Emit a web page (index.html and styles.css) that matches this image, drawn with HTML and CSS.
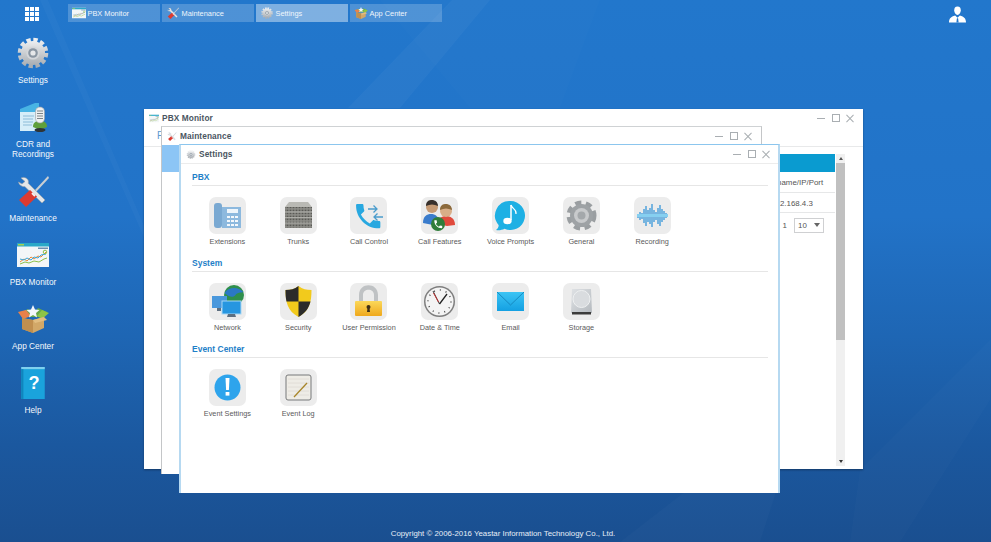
FILE: index.html
```html
<!DOCTYPE html>
<html lang="en">
<head>
<meta charset="utf-8">
<title>Yeastar Desktop</title>
<link rel="stylesheet" href="styles.css">
</head>
<body>
<svg class="defs" xmlns="http://www.w3.org/2000/svg">
  <defs>
    <linearGradient id="silver" x1="0" y1="0" x2="0" y2="1"><stop offset="0" stop-color="#eceef0"/><stop offset="1" stop-color="#a9aeb3"/></linearGradient>
    <linearGradient id="sky" x1="0" y1="0" x2="0" y2="1"><stop offset="0" stop-color="#3cc4f4"/><stop offset="1" stop-color="#14a0e2"/></linearGradient>
    <linearGradient id="gold" x1="0" y1="0" x2="0" y2="1"><stop offset="0" stop-color="#fbd85a"/><stop offset="1" stop-color="#efa81c"/></linearGradient>
    <linearGradient id="drive" x1="0" y1="0" x2="1" y2="1"><stop offset="0" stop-color="#dfe2e5"/><stop offset="1" stop-color="#b4b9be"/></linearGradient>
    <pattern id="holes" width="3" height="3" patternUnits="userSpaceOnUse"><rect width="3" height="3" fill="#8f8f8a"/><rect x=".6" y=".6" width="1.8" height="1.6" fill="#5a5a56"/></pattern>

    <symbol id="i-gear" viewBox="0 0 32 32">
      <circle cx="16" cy="16" r="13" fill="none" stroke="url(#silver)" stroke-width="4.6" stroke-dasharray="4.2 2.6"/>
      <circle cx="16" cy="16" r="12" fill="url(#silver)"/>
      <circle cx="16" cy="16" r="6.600" fill="#d4d7da"/>
      <circle cx="16" cy="16" r="4.800" fill="#8a96a2"/>
      <circle cx="16" cy="16" r="2.600" fill="#e6e8ea"/>
    </symbol>
    <symbol id="i-cdr" viewBox="0 0 32 32">
      <path d="M3 8 18 2h4v5l-2 21-17 2z" fill="#48b4e4"/>
      <path d="M3 11h17v19H3z" fill="#d6eef9"/>
      <path d="M6 15h11M6 18h10M6 21h10M6 24h9" stroke="#8cbcd8" stroke-width="1"/>
      <path d="M16 26c0-5 3-6 7-6s7 1 7 6l-7 3z" fill="#5fa03c"/>
      <rect x="18.500" y="6" width="9" height="16" rx="4.500" fill="#eef0f0" stroke="#9aa0a2" stroke-width=".6"/>
      <path d="M20 10h6M20 12.500h6M20 15h6M20 17.500h6" stroke="#7d8588" stroke-width="1"/>
      <ellipse cx="23" cy="29" rx="5.500" ry="2" fill="#2f3436"/>
    </symbol>
    <symbol id="i-tools" viewBox="0 0 32 32">
      <path d="M4 3c3-1.500 6 0 7 2 .6 1.400.4 2.500.2 3.300L28 25l-3 3L7.800 11.600C5 12 2 10 1.500 7l3.500 2 3-2.500z" fill="#e4e7e9" stroke="#9aa0a5" stroke-width=".6"/>
      <path d="M31 1 18 15l1.500 1.500L32 3z" fill="#c9ced2"/>
      <path d="M13 15 20 21.500 9 32l-7-7z" fill="#dc3a30"/>
      <path d="M15 18l3 3" stroke="#f2f2f2" stroke-width="2"/>
    </symbol>
    <symbol id="i-monitor" viewBox="0 0 32 24">
      <rect width="32" height="24" fill="#f3f6f8"/>
      <rect width="32" height="3.500" fill="#2aa8c8"/>
      <rect x="1" y="1" width="6" height="1.500" fill="#a6d050"/>
      <rect x="21" y="4.500" width="10" height="1.500" fill="#6c8fb0"/>
      <path d="M3 19l4-3 3 2 4-4 3 2 4-3 3 1 5-5" fill="none" stroke="#f08a34" stroke-width="1"/>
      <path d="M3 16l4 1 3-2 4 2 3-3 4 1 3-3 5-1" fill="none" stroke="#3ca6d8" stroke-width="1"/>
      <path d="M3 21l5-2 4 1 5-2 5 1 5-3 3-1" fill="none" stroke="#8cc04c" stroke-width="1"/>
      <circle cx="28" cy="9" r="1.800" fill="none" stroke="#8cc04c"/>
    </symbol>
    <symbol id="i-box" viewBox="0 0 32 28">
      <path d="M3 8 11 4l5 6 5-7 9 4-3 5H5z" fill="#67a84a"/>
      <path d="M1 7l8-2 5 6-8 3z" fill="#e8814a"/>
      <path d="M16 0l2 4.500 4.500.5-3.500 3 1 4.500-4-2.500-4 2.500 1-4.500-3.500-3 4.500-.5z" fill="#f4f7fb"/>
      <path d="M25 5l7 3-7 6-5-3z" fill="#8ec446"/>
      <path d="M5 13l11 2 11-3v11l-11 5-11-4z" fill="#d2a868"/>
      <path d="M16 15v13l-11-4V13z" fill="#c08f4f"/>
      <path d="M16 15 27 12l3 3-12 3z" fill="#e2bd80"/>
    </symbol>
    <symbol id="i-help" viewBox="0 0 24 30">
      <rect x="1" y="0" width="22" height="30" fill="#1aa3dc"/>
      <rect x="1" y="0" width="22" height="2" fill="#7fd0ee"/>
      <rect x="1" y="2" width="2" height="28" fill="#0f86bd"/>
      <text x="13" y="21" class="help-mark">?</text>
    </symbol>
    <symbol id="i-ext" viewBox="0 0 37 37">
      <rect x="5" y="6" width="8" height="25" rx="3" fill="#7aa9d2"/>
      <path d="M13 10h19v21H13z" fill="#8db9de"/>
      <rect x="18" y="12" width="11" height="4" fill="#eef5fb"/>
      <path d="M18 19h3v2h-3zM22 19h3v2h-3zM26 19h3v2h-3zM18 23h3v2h-3zM22 23h3v2h-3zM26 23h3v2h-3zM18 27h3v2h-3zM22 27h3v2h-3zM26 27h3v2h-3z" fill="#f4f8fc"/>
    </symbol>
    <symbol id="i-trunks" viewBox="0 0 37 37">
      <path d="M9 5h19l4 5H5z" fill="#b9b9b4"/>
      <rect x="5" y="10" width="27" height="21" fill="url(#holes)"/>
      <path d="M5 15h27M5 20.500h27M5 26h27" stroke="#b8b8b2" stroke-width=".8"/>
    </symbol>
    <symbol id="i-call" viewBox="0 0 37 37">
      <g transform="translate(2 3) scale(1.350)"><path d="M6.600 10.800c1.400 2.800 3.800 5.100 6.600 6.600l2.200-2.200c.3-.3.700-.4 1-.2 1.100.4 2.300.6 3.600.6.600 0 1 .4 1 1V20c0 .6-.4 1-1 1C10.600 21 3 13.400 3 4c0-.6.400-1 1-1h3.500c.6 0 1 .4 1 1 0 1.300.2 2.500.6 3.600.1.300 0 .7-.2 1z" fill="#28a8e0"/></g>
      <path d="M18 12h9m-3.500-3.500L27 12l-3.500 3.500M33 20h-9m3.500-3.500L24 20l3.500 3.500" fill="none" stroke="#4a9ccc" stroke-width="1.300"/>
    </symbol>
    <symbol id="i-people" viewBox="0 0 37 37">
      <path d="M2 26c0-7 4-9 8-9s8 2 8 9l-6 2z" fill="#3a7ccc"/>
      <circle cx="11" cy="10" r="6" fill="#c69a74"/>
      <path d="M5 9c0-5 3-6 6-6s6 2 6 6c-4-2-8-2-12 0z" fill="#38302c"/>
      <path d="M17 27c0-6 4-8 8-8s9 2 9 9l-8 1z" fill="#e04a3c"/>
      <circle cx="25" cy="14" r="6" fill="#d8ae88"/>
      <path d="M19 13c0-5 3-6 6-6s6 2 6 6c-4-2-8-2-12 0z" fill="#8c6a3c"/>
      <circle cx="17" cy="27" r="7" fill="#2f7d3a"/>
      <g transform="translate(12 22) scale(.44)"><path d="M6.600 10.800c1.400 2.800 3.800 5.100 6.600 6.600l2.200-2.200c.3-.3.700-.4 1-.2 1.100.4 2.300.6 3.600.6.600 0 1 .4 1 1V20c0 .6-.4 1-1 1C10.600 21 3 13.400 3 4c0-.6.400-1 1-1h3.500c.6 0 1 .4 1 1 0 1.300.2 2.500.6 3.600.1.300 0 .7-.2 1z" fill="#fff"/></g>
    </symbol>
    <symbol id="i-voice" viewBox="0 0 37 37">
      <path d="M18.500 4a14.500 14.500 0 1 1-6 27.700C10 33 7 33.500 4 33c2-1.500 2.800-3 2.600-5A14.500 14.500 0 0 1 18.500 4z" fill="#1eb0e4"/>
      <path d="M19 8v15" stroke="#fff" stroke-width="1.500"/>
      <path d="M19 8c1 4 6 4 5 9" fill="none" stroke="#fff" stroke-width="1.200"/>
      <ellipse cx="15.500" cy="24" rx="4.200" ry="3.200" fill="#fff"/>
    </symbol>
    <symbol id="i-general" viewBox="0 0 37 37">
      <circle cx="18.500" cy="18.500" r="12.500" fill="none" stroke="#9a9ea1" stroke-width="5" stroke-dasharray="6 4.470"/>
      <circle cx="18.500" cy="18.500" r="11.500" fill="#9ea2a5"/>
      <circle cx="18.500" cy="18.500" r="7.500" fill="#c8cacc"/>
      <circle cx="18.500" cy="18.500" r="4" fill="#a4a8ab"/>
    </symbol>
    <symbol id="i-wave" viewBox="0 0 37 37">
      <path d="M4 17v4M6 15v8M8 16v6M10 12v14M12 9v20M14 13v12M16 11v16M18 7v23M20 13v12M22 15v8M24 11v16M26 8v21M28 12v13M30 14v9M32 16v5" stroke="#5aa7dc" stroke-width="1.600"/>
      <path d="M3 18.500h31" stroke="#86cff0" stroke-width="3"/>
    </symbol>
    <symbol id="i-network" viewBox="0 0 37 37">
      <circle cx="25" cy="12" r="10" fill="#2f8f4c"/>
      <path d="M15.500 10c4-6 13-7 19-1-3 1-6 0-8 3s-7 2-11-2z" fill="#2b78c4"/>
      <rect x="3" y="13" width="15" height="12" fill="#4a98dc"/>
      <rect x="13" y="18" width="19" height="13" fill="#2796e0" stroke="#a6d6f4" stroke-width="1"/>
      <path d="M19 31h7l1 3h-9zM8 25h4v3H8z" fill="#5d6f80"/>
    </symbol>
    <symbol id="i-shield" viewBox="0 0 37 37">
      <path d="M18.500 3c4 3 8 4 13 4 0 12-2 21-13 27C7.500 28 5.500 19 5.500 7c5 0 9-1 13-4z" fill="#f2ca1c"/>
      <path d="M18.500 3c-4 3-8 4-13 4 0 4 .2 8 1 11.500h12zM18.500 18.500h12c-1.500 6.500-5 11.500-12 15.500z" fill="#2b2b2a"/>
    </symbol>
    <symbol id="i-lock" viewBox="0 0 37 37">
      <path d="M9 19v-7c0-13 19-13 19 0v7h-4v-7c0-7-11-7-11 0v7z" fill="#bfc2c4"/>
      <rect x="5" y="18" width="27" height="15" rx="1" fill="url(#gold)"/>
      <circle cx="18.500" cy="24" r="2" fill="#3f3016"/>
      <path d="M17.500 25h2l.5 4h-3z" fill="#3f3016"/>
    </symbol>
    <symbol id="i-clock" viewBox="0 0 37 37">
      <circle cx="18.500" cy="18.500" r="15.500" fill="#7e7e7e"/>
      <circle cx="18.500" cy="18.500" r="14" fill="#f4f4f4"/>
      <circle cx="18.500" cy="18.500" r="11.500" fill="none" stroke="#4c4c4c" stroke-width="1.500" stroke-dasharray="1 5.020"/>
      <path d="M18.500 21 26 11" stroke="#222" stroke-width="1.300"/>
      <path d="M18.500 21 12 8" stroke="#222" stroke-width=".9"/>
      <path d="M17.500 19 12.500 10" stroke="#c23030" stroke-width="1"/>
    </symbol>
    <symbol id="i-mail" viewBox="0 0 37 37">
      <rect x="5" y="9" width="27" height="19" fill="url(#sky)"/>
      <path d="M5 9l13.500 13L32 9" fill="none" stroke="#1486bc" stroke-width=".9"/>
    </symbol>
    <symbol id="i-drive" viewBox="0 0 37 37">
      <path d="M9 6h19l1 24H8z" fill="url(#drive)"/>
      <circle cx="18.500" cy="16" r="8.500" fill="#d9dcdf" stroke="#eef0f1"/>
      <rect x="9" y="29" width="19" height="2.500" fill="#3b3b3b"/>
    </symbol>
    <symbol id="i-alert" viewBox="0 0 37 37">
      <circle cx="18.500" cy="18.500" r="13" fill="#2ea4ec"/>
      <path d="M16.500 9h4l-.6 12h-2.800z" fill="#fff"/>
      <rect x="16.600" y="23" width="3.800" height="3.600" fill="#fff"/>
    </symbol>
    <symbol id="i-log" viewBox="0 0 37 37">
      <rect x="6" y="6" width="25" height="25" rx="2" fill="#eeece6" stroke="#77797a"/>
      <path d="M8 10h21M8 14h21M8 18h21M8 22h21M8 26h21" stroke="#dddbd3" stroke-width=".8"/>
      <path d="M14 28 27 14" stroke="#a8862a" stroke-width="1.300"/>
    </symbol>
    <symbol id="i-user" viewBox="0 0 18 18">
      <path d="M9 1c2.500 0 3.500 1.800 3.500 4 0 2.600-1.700 5-3.500 5S5.500 7.600 5.500 5C5.500 2.800 6.500 1 9 1z" fill="#fff"/>
      <path d="M0 18c0-4.500 2-6 6.500-7.500L9 13l2.500-2.500C16 12 18 13.500 18 18z" fill="#fff"/>
      <path d="M8.400 13.500h1.200l.6 4.500H7.800z" fill="#2176cb"/>
    </symbol>
  </defs>
</svg>

<div class="desktop">
  <svg class="wallpaper" viewBox="0 0 991 542" preserveAspectRatio="none" aria-hidden="true">
    <path d="M48 0 148 235 145 240 40 0z" fill="#fff" opacity=".025"/>
    <path d="M452 0 348 108H400L490 0z" fill="#fff" opacity=".035"/>
    <path d="M380 0H600L560 108H470z" fill="#fff" opacity=".012"/>
    <path d="M620 542 700 480H780L760 542z" fill="#fff" opacity=".02"/>
    <path d="M860 470 990 340V400L900 542H850z" fill="#fff" opacity=".015"/>
  </svg>

  <header class="topbar">
    <div class="launcher"><i></i><i></i><i></i><i></i><i></i><i></i><i></i><i></i><i></i></div>
    <nav class="tabs">
      <div class="tab"><svg class="tab-icon"><use href="#i-monitor"/></svg><span>PBX Monitor</span></div>
      <div class="tab"><svg class="tab-icon"><use href="#i-tools"/></svg><span>Maintenance</span></div>
      <div class="tab tab-active"><svg class="tab-icon"><use href="#i-gear"/></svg><span>Settings</span></div>
      <div class="tab"><svg class="tab-icon"><use href="#i-box"/></svg><span>App Center</span></div>
    </nav>
    <svg class="user"><use href="#i-user"/></svg>
  </header>

  <aside class="sidebar">
    <div class="shortcut"><svg class="shortcut-icon"><use href="#i-gear"/></svg><span>Settings</span></div>
    <div class="shortcut"><svg class="shortcut-icon"><use href="#i-cdr"/></svg><span>CDR and<br>Recordings</span></div>
    <div class="shortcut"><svg class="shortcut-icon"><use href="#i-tools"/></svg><span>Maintenance</span></div>
    <div class="shortcut"><svg class="shortcut-icon"><use href="#i-monitor"/></svg><span>PBX Monitor</span></div>
    <div class="shortcut"><svg class="shortcut-icon"><use href="#i-box"/></svg><span>App Center</span></div>
    <div class="shortcut"><svg class="shortcut-icon"><use href="#i-help"/></svg><span>Help</span></div>
  </aside>

  <section class="window win-pbx">
    <div class="titlebar">
      <svg class="title-icon"><use href="#i-monitor"/></svg>
      <span class="title-text">PBX Monitor</span>
      <div class="controls"><i class="c-min"></i><i class="c-max"></i><i class="c-close"></i></div>
    </div>
    <div class="pbx-tabs">PBX</div>
    <div class="pbx-body">
      <div class="pbx-table">
        <div class="table-head"></div>
        <div class="table-row"><span class="table-cell">Hostname/IP/Port</span></div>
        <div class="table-row"><span class="table-cell">192.168.4.3</span></div>
        <div class="pager"><span>1</span><div class="select">10<b></b></div></div>
      </div>
      <div class="scrollbar"><b class="arrow-up"></b><div class="thumb"></div><b class="arrow-down"></b></div>
    </div>
  </section>

  <section class="window win-maint">
    <div class="titlebar">
      <svg class="title-icon"><use href="#i-tools"/></svg>
      <span class="title-text">Maintenance</span>
      <div class="controls"><i class="c-min"></i><i class="c-max"></i><i class="c-close"></i></div>
    </div>
    <div class="maint-head"></div>
  </section>

  <section class="window win-settings">
    <div class="titlebar">
      <svg class="title-icon"><use href="#i-gear"/></svg>
      <span class="title-text">Settings</span>
      <div class="controls"><i class="c-min"></i><i class="c-max"></i><i class="c-close"></i></div>
    </div>
    <div class="settings-body">
      <h2 class="group-title">PBX</h2>
      <div class="grid">
        <div class="item"><div class="tile"><svg><use href="#i-ext"/></svg></div><span>Extensions</span></div>
        <div class="item"><div class="tile"><svg><use href="#i-trunks"/></svg></div><span>Trunks</span></div>
        <div class="item"><div class="tile"><svg><use href="#i-call"/></svg></div><span>Call Control</span></div>
        <div class="item"><div class="tile"><svg><use href="#i-people"/></svg></div><span>Call Features</span></div>
        <div class="item"><div class="tile"><svg><use href="#i-voice"/></svg></div><span>Voice Prompts</span></div>
        <div class="item"><div class="tile"><svg><use href="#i-general"/></svg></div><span>General</span></div>
        <div class="item"><div class="tile"><svg><use href="#i-wave"/></svg></div><span>Recording</span></div>
      </div>
      <h2 class="group-title">System</h2>
      <div class="grid">
        <div class="item"><div class="tile"><svg><use href="#i-network"/></svg></div><span>Network</span></div>
        <div class="item"><div class="tile"><svg><use href="#i-shield"/></svg></div><span>Security</span></div>
        <div class="item"><div class="tile"><svg><use href="#i-lock"/></svg></div><span>User Permission</span></div>
        <div class="item"><div class="tile"><svg><use href="#i-clock"/></svg></div><span>Date &amp; Time</span></div>
        <div class="item"><div class="tile"><svg><use href="#i-mail"/></svg></div><span>Email</span></div>
        <div class="item"><div class="tile"><svg><use href="#i-drive"/></svg></div><span>Storage</span></div>
      </div>
      <h2 class="group-title">Event Center</h2>
      <div class="grid">
        <div class="item"><div class="tile"><svg><use href="#i-alert"/></svg></div><span>Event Settings</span></div>
        <div class="item"><div class="tile"><svg><use href="#i-log"/></svg></div><span>Event Log</span></div>
      </div>
    </div>
  </section>

  <footer class="copyright">Copyright © 2006-2016 Yeastar Information Technology Co., Ltd.</footer>
</div>
</body>
</html>
```

FILE: styles.css
```css
* { box-sizing: border-box; }
html, body { margin: 0; height: 100%; overflow: hidden; }
body { font-family: "Liberation Sans", Arial, sans-serif; }
.defs { display: block; width: 0; height: 0; }

.desktop {
  position: relative;
  width: 991px;
  height: 542px;
  overflow: hidden;
  display: flex;
  flex-direction: column;
  background: linear-gradient(180deg, #2277cc 0, #2273c8 40%, #1e66b4 62%, #1b589f 82%, #1a4f90 100%);
}
.wallpaper { position: absolute; inset: 0; width: 100%; height: 100%; }

/* Top bar */
.topbar {
  position: relative;
  display: flex;
  align-items: flex-start;
  height: 37px;
  padding-top: 4px;
}
.launcher {
  display: grid;
  grid-template-columns: repeat(3, 4px);
  grid-auto-rows: 4px;
  gap: 1.200px;
  margin: 2.500px 0 0 25px;
  width: 43px;
}
.launcher i { background: #fff; }
.tabs { display: flex; gap: 2.500px; }
.tab {
  display: flex;
  align-items: center;
  width: 91.500px;
  height: 18px;
  padding-left: 4px;
  gap: 1.500px;
  background: rgba(255, 255, 255, .2);
  color: #f0f6fc;
  font-size: 7.400px;
}
.tab-active { background: rgba(255, 255, 255, .42); }
.tab-icon { width: 14px; height: 12px; flex: none; }
.user { width: 17px; height: 18px; margin: 1px 25px 0 auto; }

/* Left shortcuts */
.sidebar {
  position: relative;
  flex: 1;
  width: 66px;
  display: flex;
  flex-direction: column;
  gap: 16px;
}
.shortcut {
  display: flex;
  flex-direction: column;
  align-items: center;
  gap: 6px;
  color: #f4f8fc;
  font-size: 8.300px;
  line-height: 10px;
  text-align: center;
}
.shortcut-icon { width: 32px; height: 32px; }

.copyright {
  position: relative;
  padding: 0 0 2px 15px;
  height: 14px;
  line-height: 12px;
  text-align: center;
  font-size: 7.850px;
  color: #e6eef7;
}

/* Windows */
.window {
  position: absolute;
  background: #fff;
  display: flex;
  flex-direction: column;
}
.win-pbx { left: 144px; top: 109px; width: 719px; height: 360px; box-shadow: 0 1px 2px rgba(0, 0, 0, .35); }
.win-maint { left: 161px; top: 126px; width: 601px; height: 348px; border-top: 1px solid #cfd2d4; border-left: 1px solid #c4c6c8; border-right: 1px solid #c4c6c8; }
.win-settings { left: 179px; top: 144px; width: 601px; height: 349px; border-top: 1px solid #8cc6ee; border-left: 2px solid #b6d9f1; border-right: 2px solid #b6d9f1; }

.titlebar {
  display: flex;
  align-items: center;
  flex: none;
  height: 18px;
  padding-left: 5px;
}
.title-icon { width: 10px; height: 9px; flex: none; margin-right: 3px; }
.title-text { font-size: 8.300px; font-weight: 700; color: #4a5561; letter-spacing: .1px; }
.controls { display: flex; align-items: center; gap: 6.500px; margin-left: auto; margin-right: 9px; }
.win-settings .controls { margin-right: 8px; }
.controls i { position: relative; display: block; width: 8px; height: 8px; }
.c-min::before { content: ""; position: absolute; left: 0; right: 0; top: 4px; height: 1px; background: #a9aeb2; }
.c-max { border: 1px solid #a9aeb2; }
.c-close::before, .c-close::after { content: ""; position: absolute; left: -1px; right: -1px; top: 3.500px; height: 1px; background: #a9aeb2; transform: rotate(45deg); }
.c-close::after { transform: rotate(-45deg); }

/* PBX Monitor */
.pbx-tabs {
  flex: none;
  height: 20px;
  padding-left: 13px;
  border-bottom: 1px solid #e8e9ea;
  color: #5d9ad0;
  font-size: 10px;
  line-height: 18px;
}
.pbx-body { flex: 1; display: flex; gap: 1px; padding: 7px 18px 3px 40px; min-height: 0; }
.pbx-table { flex: 1; display: flex; flex-direction: column; }
.table-head { height: 18px; background: #0a9bd0; }
.table-row {
  display: flex;
  justify-content: flex-end;
  height: 20.500px;
  border-bottom: 1px solid #e6e7e8;
  font-size: 7.900px;
  line-height: 21px;
  color: #555;
}
.table-cell { width: 86px; text-align: center; }
.pager { display: flex; justify-content: flex-end; align-items: center; gap: 7px; margin-top: 5px; padding-right: 11px; font-size: 7.900px; color: #555; }
.select { position: relative; width: 30px; height: 15px; padding-left: 3px; border: 1px solid #cfd0d2; line-height: 14px; }
.select b { position: absolute; right: 3px; top: 4px; border: 3px solid transparent; border-top: 4px solid #666; border-bottom: 0; }
.scrollbar { position: relative; flex: none; width: 9px; background: #f0f0f0; display: flex; flex-direction: column; align-items: center; }
.thumb { position: absolute; left: 0; top: 9px; width: 9px; height: 177px; background: #c0c0c0; }
.arrow-up { position: absolute; top: 3px; border: 2px solid transparent; border-bottom: 3px solid #555; border-top: 0; }
.arrow-down { position: absolute; bottom: 3px; border: 2px solid transparent; border-top: 3px solid #333; border-bottom: 0; }

/* Maintenance */
.maint-head { height: 27px; background: #8cc5f5; }

/* Settings */
.settings-body { flex: 1; padding: 0 10px 0 11px; border-top: 1px solid #ececec; }
.group-title {
  margin: 0;
  height: 15px;
  border-bottom: 1px solid #e6e6e6;
  color: #1f7fc8;
  font-size: 8.500px;
  font-weight: 700;
  line-height: 12px;
}
.settings-body .group-title:first-child { margin-top: 7px; }
.grid {
  display: grid;
  grid-template-columns: repeat(7, 70.800px);
  height: 71px;
  padding-top: 10.500px;
}
.item {
  display: flex;
  flex-direction: column;
  align-items: center;
  gap: 3px;
  color: #5a5a5a;
  font-size: 7.300px;
  line-height: 10px;
  white-space: nowrap;
}
.tile { width: 37px; height: 37px; border-radius: 7px; background: #ececec; }
.tile svg { display: block; width: 37px; height: 37px; }
.help-mark { font: 700 17px "Liberation Sans", Arial, sans-serif; fill: #fff; text-anchor: middle; }
```
